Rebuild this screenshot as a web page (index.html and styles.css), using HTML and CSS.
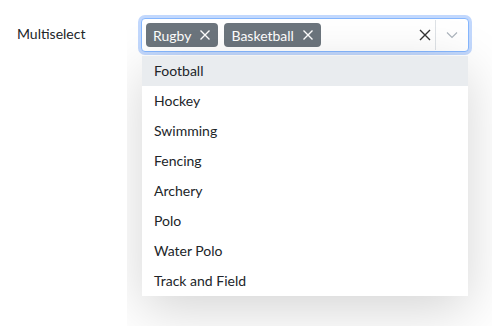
FILE: index.html
```html
<html>
<head>
    <link rel="stylesheet" href="styles.css">
</head>
<body>
    <div class="form-row">
        <label class="form-row__label">Multiselect</label>
        <div class="form-row__field">
            <div class="multiselect">
                <div class="multiselect__control">
                    <div class="multiselect__values">
                        <span class="tag">Rugby
                            <svg class="tag__remove" viewBox="0 0 12 12"><path d="M1.5 1.5l9 9M10.5 1.5l-9 9"/></svg>
                        </span>
                        <span class="tag">Basketball
                            <svg class="tag__remove" viewBox="0 0 12 12"><path d="M1.5 1.5l9 9M10.5 1.5l-9 9"/></svg>
                        </span>
                    </div>
                    <div class="multiselect__clear">
                        <svg viewBox="0 0 12 12"><path d="M1 1l10 10M11 1l-10 10"/></svg>
                    </div>
                    <div class="multiselect__toggle">
                        <svg viewBox="0 0 12 12"><path d="M1 3.5l5 5 5-5"/></svg>
                    </div>
                </div>
                <ul class="multiselect__menu">
                    <li class="option option--active">Football</li>
                    <li class="option">Hockey</li>
                    <li class="option">Swimming</li>
                    <li class="option">Fencing</li>
                    <li class="option">Archery</li>
                    <li class="option">Polo</li>
                    <li class="option">Water Polo</li>
                    <li class="option">Track and Field</li>
                </ul>
            </div>
        </div>
    </div>
</body>
</html>
```

FILE: styles.css
```css
body {
    margin: 0;
    font-family: Lato, "Open Sans", sans-serif;
    font-size: 14px;
    color: #212529;
    background: #fff;
}

ul, li {
    list-style-type: none;
    margin: 0;
    padding: 0;
}

.form-row {
    display: flex;
    height: 100vh;
}

.form-row__label {
    width: 110px;
    padding: 25px 0 0 17px;
    font-size: 14px;
}

.form-row__field {
    flex: 1;
    overflow: hidden;
    padding: 18px 23px 0 14px;
}

.multiselect {
    position: relative;
}

.multiselect__control {
    display: flex;
    align-items: center;
    height: 34px;
    box-sizing: border-box;
    border: 1px solid #86b7fe;
    border-radius: 4px;
    box-shadow: 0 0 0 3px #c2d8fd;
    background: #fff;
}

.multiselect__values {
    flex: 1;
    display: flex;
    gap: 6px;
    padding-left: 4px;
}

.tag {
    display: flex;
    align-items: center;
    gap: 8px;
    height: 24px;
    padding: 0 7px;
    border-radius: 4px;
    background: #6c757d;
    color: #fff;
}

.tag__remove {
    width: 12px;
    height: 12px;
    stroke: #fff;
    stroke-width: 1.4;
    fill: none;
}

.multiselect__clear {
    display: flex;
    padding-right: 4px;
}

.multiselect__clear svg {
    width: 12px;
    height: 12px;
    stroke: #333;
    stroke-width: 1.4;
    fill: none;
}

.multiselect__toggle {
    display: flex;
    align-items: center;
    justify-content: center;
    width: 32px;
    height: 30px;
    border-left: 1px solid #dee2e6;
}

.multiselect__toggle svg {
    width: 12px;
    height: 12px;
    stroke: #adb5bd;
    stroke-width: 1.2;
    fill: none;
}

.multiselect__menu {
    position: absolute;
    top: 38px;
    left: 1px;
    right: 1px;
    background: #fff;
    box-shadow: 0 14px 50px rgba(0, 0, 0, .17);
}

.option {
    height: 30px;
    line-height: 30px;
    padding: 0 12px;
}

.option--active {
    background: #e9ecef;
}
```
